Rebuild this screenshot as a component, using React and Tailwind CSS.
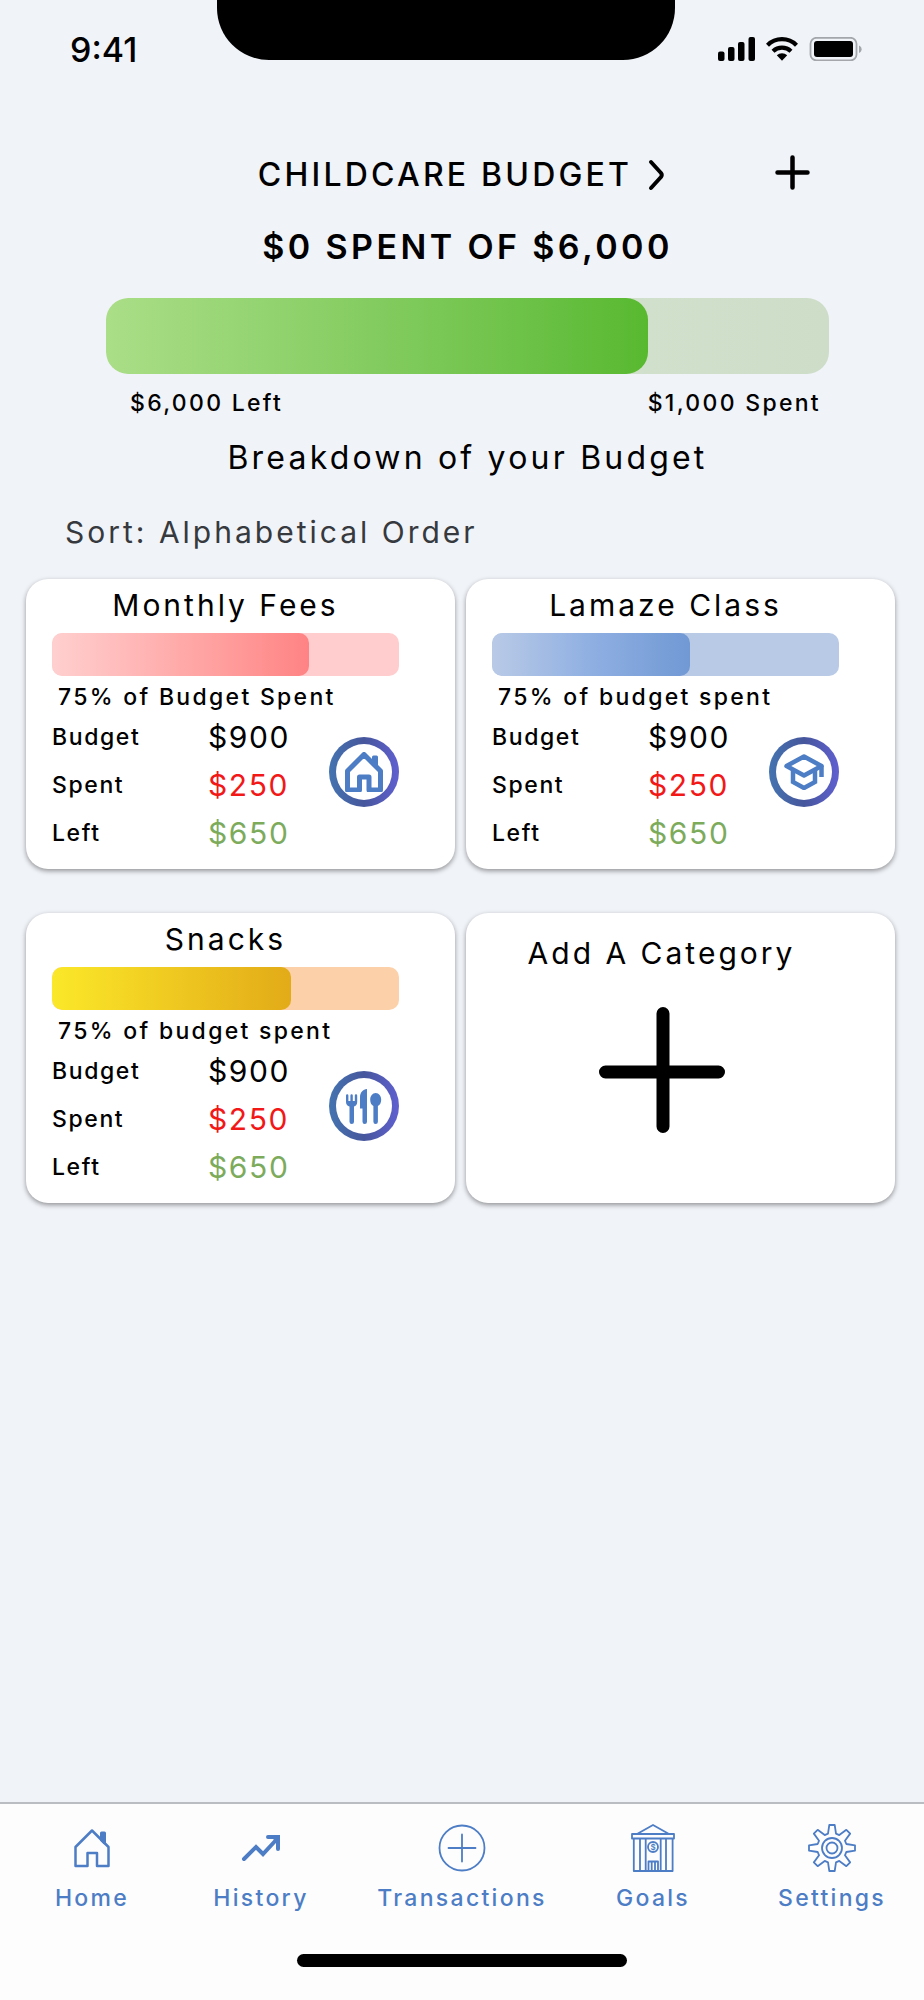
// ──────────────────────────────────────────────────────────────
// App.jsx — Childcare budget overview screen
// Status bar, budget summary, category cards and bottom navigation
// ──────────────────────────────────────────────────────────────

const categories = [
  {
    name: "Monthly Fees",
    note: "75% of Budget Spent",
    percent: 74,
    track: "bg-[#ffcdce]",
    fill: "bg-linear-to-r from-[#ffcfcf] to-[#ff8384]",
    icon: <HouseIcon className="w-[38px] h-10" strokeWidth={5} />,
  },
  {
    name: "Lamaze Class",
    note: "75% of budget spent",
    percent: 57,
    track: "bg-[#b9cae6]",
    fill: "bg-linear-to-r from-[#b9cae6] via-[#8fafe2] to-[#7199d4]",
    icon: <CapIcon />,
  },
  {
    name: "Snacks",
    note: "75% of budget spent",
    percent: 69,
    track: "bg-[#fcd0a9]",
    fill: "bg-linear-to-r from-[#fbe829] to-[#e2ab18]",
    icon: <UtensilsIcon />,
  },
];

const tabs = [
  { label: "Home", icon: <HouseIcon className="w-[38px] h-10" strokeWidth={2.5} /> },
  { label: "History", icon: <TrendIcon /> },
  { label: "Transactions", icon: <CirclePlusIcon /> },
  { label: "Goals", icon: <BankIcon /> },
  { label: "Settings", icon: <GearIcon /> },
];

/* ── Icons ─────────────────────────────────────────────────── */

function HouseIcon({ className, strokeWidth }) {
  return (
    <svg viewBox="-1 -1 38 40" className={className} fill="none" stroke="currentColor" strokeWidth={strokeWidth} strokeLinejoin="round">
      <path d="M18 1.500 34.500 18v19H23V24h-9.500v13H1.500V18Z" />
      <path d="M27.500 4h3v10l-3-3Z" fill="currentColor" strokeWidth="3" />
    </svg>
  );
}

function CapIcon() {
  return (
    <svg viewBox="0 0 40 36" className="w-10 h-9" fill="none" stroke="currentColor" strokeWidth="4.500" strokeLinejoin="round">
      <path d="M20 2.500 37.500 12 20 21.500 2.500 12Z" />
      <path d="M9 16.500V28l11 6 11-6V16.500" strokeLinejoin="miter" />
      <path d="M37.500 12v11" />
    </svg>
  );
}

function UtensilsIcon() {
  return (
    <svg viewBox="0 0 36 35" className="w-9 h-[35px]" fill="currentColor">
      <path d="M0 6.500a1.200 1.200 0 0 1 2.400 0V12h2V6.500a1.200 1.200 0 0 1 2.400 0V12h2V6.500a1.200 1.200 0 0 1 2.400 0V13c0 2.500-1.400 4-3.200 4.500v15.200a2.200 2.200 0 0 1-4.500 0V17.500C1.500 17 0 15.500 0 13Z" />
      <path d="M21 0v32.700a2.200 2.200 0 0 1-4.500 0V19.500H14V8c0-4.500 3-7.500 7-8Z" />
      <path d="M29.700 4c3.200 0 5.500 3 5.500 6.700 0 3-1.300 5.300-3.300 6.300v15.700a2.200 2.200 0 0 1-4.500 0V17c-2-1-3.200-3.300-3.200-6.300C24.200 7 26.500 4 29.700 4Z" />
    </svg>
  );
}

function TrendIcon() {
  return (
    <svg viewBox="0 0 40 28" className="w-10 h-7" fill="none" stroke="currentColor" strokeWidth="4" strokeLinecap="round">
      <path d="m3 25 12-12 7 7L36 5" strokeLinejoin="miter" />
      <path d="M27 3h10v12" />
      <path d="M31 3h6v6Z" fill="currentColor" strokeWidth="1" />
    </svg>
  );
}

function CirclePlusIcon() {
  return (
    <svg viewBox="0 0 48 48" className="size-12" fill="none" stroke="currentColor" strokeWidth="1.800" strokeLinecap="round">
      <circle cx="24" cy="24" r="22.500" />
      <path d="M24 10.500v27M10.500 24h27" />
    </svg>
  );
}

function BankIcon() {
  return (
    <svg viewBox="0 0 44 48" className="w-11 h-12" fill="none" stroke="currentColor" strokeWidth="1.800" strokeLinejoin="round">
      <path d="M6 10 22 1l16 9" />
      <path d="M1 10h42v4.500H1ZM2.800 14.500h38.800V47H2.800Z" />
      <path d="M9 15v32M14.700 15v32M29.700 15v32M35 15v32" />
      <circle cx="22" cy="23" r="5" />
      <path d="M17.500 47v-9.500h9.500V47M20.700 38v9M24 38v9" />
      <text x="22" y="26" textAnchor="middle" fontSize="8" fontWeight="600" fill="currentColor" stroke="none">$</text>
    </svg>
  );
}

function GearIcon() {
  // one tooth, repeated every 45 degrees
  const tooth = [[-4, -14.3], [-2.7, -23], [2.7, -23], [4, -14.3]];
  const points = Array.from({ length: 8 }, (_, i) => {
    const a = (i * Math.PI) / 4;
    return tooth.map(([x, y]) => [
      24 + x * Math.cos(a) - y * Math.sin(a),
      24 + x * Math.sin(a) + y * Math.cos(a),
    ]);
  }).flat();

  return (
    <svg viewBox="0 0 48 48" className="size-12" fill="none" stroke="currentColor" strokeWidth="1.800" strokeLinejoin="round">
      <polygon points={points.map((p) => p.join(",")).join(" ")} />
      <circle cx="24" cy="24" r="10" />
      <circle cx="24" cy="24" r="5.500" />
    </svg>
  );
}

function StatusIcons() {
  return (
    <svg viewBox="0 0 144 24" className="w-36 h-6" fill="none">
      <g fill="black">
        <rect x="0" y="14.500" width="6.500" height="9.500" rx="2" />
        <rect x="10" y="10" width="6.500" height="14" rx="2" />
        <rect x="20" y="5" width="6.500" height="19" rx="2" />
        <rect x="30.500" y="0" width="6.500" height="24" rx="2" />
        <path d="M64 23.800 58.800 18.300a7.500 7.500 0 0 1 10.400 0Z" />
      </g>
      <path d="M49.500 8.200a20.500 20.500 0 0 1 29 0M55 14.200a13 13 0 0 1 18 0" stroke="black" strokeWidth="4.200" />
      <rect x="92.500" y="0.800" width="46" height="22.600" rx="6" stroke="#a3a6aa" strokeWidth="1.800" />
      <rect x="96" y="4" width="39" height="16" rx="3" fill="black" />
      <path d="M141 8.500c3.500 1.500 3.500 6 0 7.500Z" fill="#a3a6aa" />
    </svg>
  );
}

/* ── Building blocks ───────────────────────────────────────── */

function ProgressBar({ label, percent, className, fill }) {
  return (
    <div role="progressbar" aria-label={label} aria-valuenow={percent} className={`overflow-hidden ${className}`}>
      <div className={`h-full rounded-[inherit] ${fill}`} style={{ width: `${percent}%` }} />
    </div>
  );
}

function IconRing({ children }) {
  return (
    <div className="mt-6 size-[70px] shrink-0 rounded-full p-[7px] bg-linear-to-r from-[#4474b0] via-[#46569c] to-[#605fd0]">
      <div className="flex size-full items-center justify-center rounded-full bg-white text-[#4d7dc5]">{children}</div>
    </div>
  );
}

function CategoryCard({ name, note, percent, track, fill, icon }) {
  return (
    <article className="rounded-[22px] bg-white pt-1.5 pb-3 pl-[26px] pr-14 shadow-[0_2px_5px_rgba(0,0,0,0.4)]">
      <h3 className="text-center text-[30px] leading-10 tracking-widest">{name}</h3>
      <ProgressBar label={name} percent={percent} className={`mt-2 h-[43px] rounded-[10px] ${track}`} fill={fill} />
      <p className="mt-[5px] ml-1.5 text-[23px] leading-8 font-medium tracking-widest">{note}</p>
      <div className="flex items-start justify-between">
        <dl className="grid grid-cols-[156px_auto] auto-rows-[48px] items-center tracking-widest">
          <dt className="text-[23px] font-medium">Budget</dt>
          <dd className="text-[30px]">$900</dd>
          <dt className="text-[23px] font-medium">Spent</dt>
          <dd className="text-[30px] text-[#f31818]">$250</dd>
          <dt className="text-[23px] font-medium">Left</dt>
          <dd className="text-[30px] text-[#7dab5c]">$650</dd>
        </dl>
        <IconRing>{icon}</IconRing>
      </div>
    </article>
  );
}

function AddCategoryCard() {
  return (
    <button type="button" className="flex flex-col items-center rounded-[22px] bg-white pt-5 pl-[26px] pr-16 shadow-[0_2px_5px_rgba(0,0,0,0.4)]">
      <span className="text-[30px] leading-10 tracking-widest">Add A Category</span>
      <svg viewBox="0 0 126 126" className="mt-[34px] size-[126px]" stroke="black" strokeWidth="13" strokeLinecap="round">
        <path d="M64 6.500v113M6.500 65h113" />
      </svg>
    </button>
  );
}

/* ── Page ──────────────────────────────────────────────────── */

export default function App() {
  return (
    <div className="flex min-h-screen flex-col bg-[#f0f3f8] font-['Inter',sans-serif] text-black">
      {/* Status bar with notch */}
      <header className="grid h-[98px] grid-cols-[217fr_458fr_249fr] items-center">
        <span className="pl-[70px] text-[34px] font-medium">9:41</span>
        <div className="h-[60px] self-start rounded-b-[52px] bg-black" />
        <div className="flex justify-end pr-[62px]">
          <StatusIcons />
        </div>
      </header>

      <main className="flex-1">
        <div className="mt-[57px] grid grid-cols-[1fr_auto_1fr] items-start">
          <button type="button" className="col-start-2 flex items-center gap-4 text-[32px] leading-10 font-medium tracking-widest">
            CHILDCARE BUDGET
            <svg viewBox="0 0 18 32" className="w-[18px] h-8" fill="none" stroke="currentColor" strokeWidth="4" strokeLinecap="round" strokeLinejoin="round">
              <path d="m3 3 10 11q1.500 2 0 4L3 29" />
            </svg>
          </button>
          <button type="button" aria-label="Add" className="mr-[113px] justify-self-end">
            <svg viewBox="0 0 36 36" className="block size-9" stroke="currentColor" strokeWidth="4.500" strokeLinecap="round">
              <path d="M17.500 2.500v30M2.500 17.500h30" />
            </svg>
          </button>
        </div>

        <section className="mr-[95px] ml-[106px]">
          <h1 className="mt-8 text-center text-[34px] leading-10 font-semibold tracking-widest">$0 SPENT OF $6,000</h1>
          <ProgressBar
            label="Childcare budget"
            percent={75}
            className="mt-[31px] h-[76px] rounded-[22px] bg-linear-to-r from-[#dce9d6] to-[#cdddc8]"
            fill="bg-linear-to-r from-[#aade87] to-[#58b92f]"
          />
          <div className="mt-[13px] flex justify-between pr-2 pl-6 text-[23px] leading-8 font-medium tracking-widest">
            <span>$6,000 Left</span>
            <span>$1,000 Spent</span>
          </div>
          <h2 className="mt-[19px] text-center text-[32px] leading-10 tracking-widest">Breakdown of your Budget</h2>
        </section>

        <button type="button" className="mt-[34px] ml-[65px] block text-[30px] leading-10 tracking-widest text-[#36393d]">
          Sort: Alphabetical Order
        </button>

        <section className="mt-[27px] mr-[29px] ml-[26px] grid grid-cols-2 gap-x-[11px] gap-y-11">
          {categories.map((category) => (
            <CategoryCard key={category.name} {...category} />
          ))}
          <AddCategoryCard />
        </section>
      </main>

      <footer className="border-t-2 border-[#babdc1] bg-[#fdfdfe]">
        <nav className="grid grid-cols-[144fr_194fr_208fr_174fr_184fr] pt-5 pl-5 text-[#4d7dc5]">
          {tabs.map((tab) => (
            <a key={tab.label} href="#" className="flex flex-col items-center gap-2.5">
              <span className="flex h-12 items-center">{tab.icon}</span>
              <span className="text-[23px] leading-8 font-medium tracking-widest">{tab.label}</span>
            </a>
          ))}
        </nav>
        <div className="mx-auto mt-10 mb-[33px] h-[13px] w-[330px] rounded-full bg-black" />
      </footer>
    </div>
  );
}
